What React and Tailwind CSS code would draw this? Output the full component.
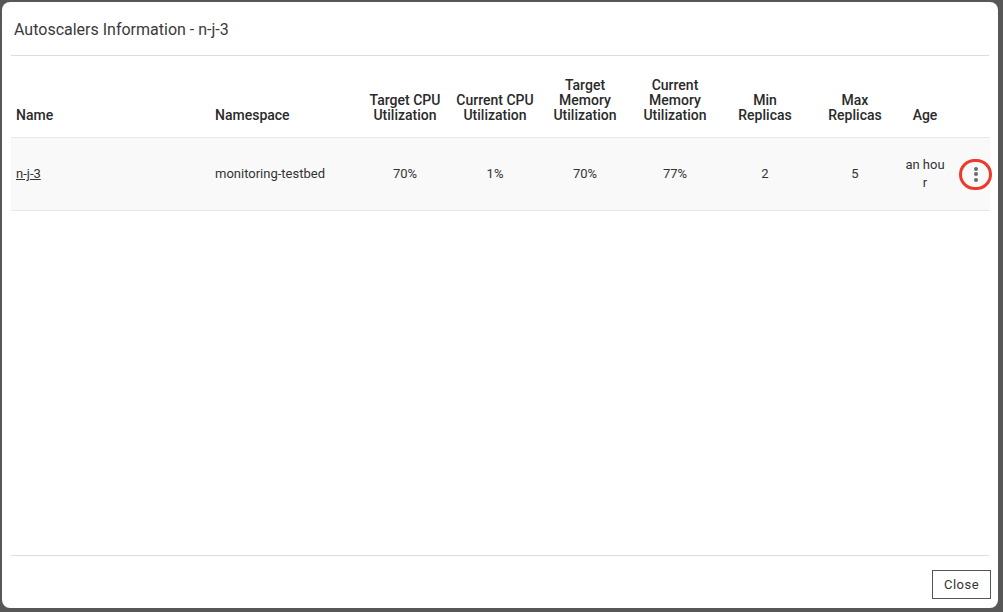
import React from "react";

const columns = [
  { id: "name", label: ["Name"], width: "w-[199px]", align: "text-left" },
  { id: "namespace", label: ["Namespace"], width: "w-[150px]", align: "text-left" },
  { id: "tcpu", label: ["Target CPU", "Utilization"], width: "w-[90px]", align: "text-center" },
  { id: "ccpu", label: ["Current CPU", "Utilization"], width: "w-[90px]", align: "text-center" },
  { id: "tmem", label: ["Target", "Memory", "Utilization"], width: "w-[90px]", align: "text-center" },
  { id: "cmem", label: ["Current", "Memory", "Utilization"], width: "w-[90px]", align: "text-center" },
  { id: "min", label: ["Min", "Replicas"], width: "w-[90px]", align: "text-center" },
  { id: "max", label: ["Max", "Replicas"], width: "w-[90px]", align: "text-center" },
  { id: "age", label: ["Age"], width: "w-[50px]", align: "text-center" },
  { id: "actions", label: [""], width: "w-[40px]", align: "text-center" },
];

const rows = [
  {
    name: "n-j-3",
    namespace: "monitoring-testbed",
    tcpu: "70%",
    ccpu: "1%",
    tmem: "70%",
    cmem: "77%",
    min: "2",
    max: "5",
    age: "an hour",
  },
];

const KebabButton = () => (
  // menu trigger, highlighted with a red ring in the screenshot
  <div className="relative ml-auto -mr-[2px] flex h-[31px] w-[33px] items-center justify-center">
    <div className="absolute inset-0 rounded-full border-[3px] border-[#ec3a2d]" />
    <div className="flex flex-col items-center gap-[1.5px]">
      <span className="h-[4px] w-[4px] rounded-full bg-[#6b6b6b]" />
      <span className="h-[4px] w-[4px] rounded-full bg-[#6b6b6b]" />
      <span className="h-[4px] w-[4px] rounded-full bg-[#6b6b6b]" />
    </div>
  </div>
);

export default function App() {
  return (
    <div className="h-[612px] w-[1003px] bg-[#575757] pl-[2px] pr-[5px] pt-[2px] pb-[4px] font-['Roboto','Liberation_Sans',sans-serif]">
      <div className="flex h-full w-full flex-col rounded-[8px] bg-white px-[9px]">
        {/* Header */}
        <div className="flex h-[54px] items-center border-b border-[#dcdcdc] px-[3px] pt-[2px]">
          <h2 className="text-[16px] text-[#3a3a3a]">Autoscalers Information - n-j-3</h2>
        </div>

        {/* Body */}
        <div className="flex-1">
          <table className="w-full table-fixed border-collapse">
            <colgroup>
              {columns.map((c) => (
                <col key={c.id} className={c.width} />
              ))}
            </colgroup>
            <thead>
              <tr>
                {columns.map((c) => (
                  <th
                    key={c.id}
                    className={`px-[5px] pt-[22px] pb-[14px] align-bottom text-[14px] font-medium leading-[15px] text-[#2a2a2a] ${c.align}`}
                  >
                    {c.label.map((l, i) => (
                      <div key={i}>{l}</div>
                    ))}
                  </th>
                ))}
              </tr>
            </thead>
            <tbody>
              {rows.map((r) => (
                <tr key={r.name} className="h-[73px] border-y border-[#e8e8e8] bg-[#f9f9f9] text-[13px] leading-[18px] text-[#333]">
                  <td className="px-[5px] text-left">
                    <a href="#" className="underline">{r.name}</a>
                  </td>
                  <td className="px-[5px] text-left">{r.namespace}</td>
                  <td className="px-[5px] text-center">{r.tcpu}</td>
                  <td className="px-[5px] text-center">{r.ccpu}</td>
                  <td className="px-[5px] text-center">{r.tmem}</td>
                  <td className="px-[5px] text-center">{r.cmem}</td>
                  <td className="px-[5px] text-center">{r.min}</td>
                  <td className="px-[5px] text-center">{r.max}</td>
                  <td className="px-[5px] text-center break-all">{r.age}</td>
                  <td className="px-0">
                    <KebabButton />
                  </td>
                </tr>
              ))}
            </tbody>
          </table>
        </div>

        {/* Footer */}
        <div className="flex justify-end border-t border-[#dcdcdc] pt-[14px] pb-[9px]">
          <button className="-mr-[2px] h-[29px] w-[59px] border border-[#555] bg-white text-[13px] tracking-[0.5px] text-[#333]">
            Close
          </button>
        </div>
      </div>
    </div>
  );
}
